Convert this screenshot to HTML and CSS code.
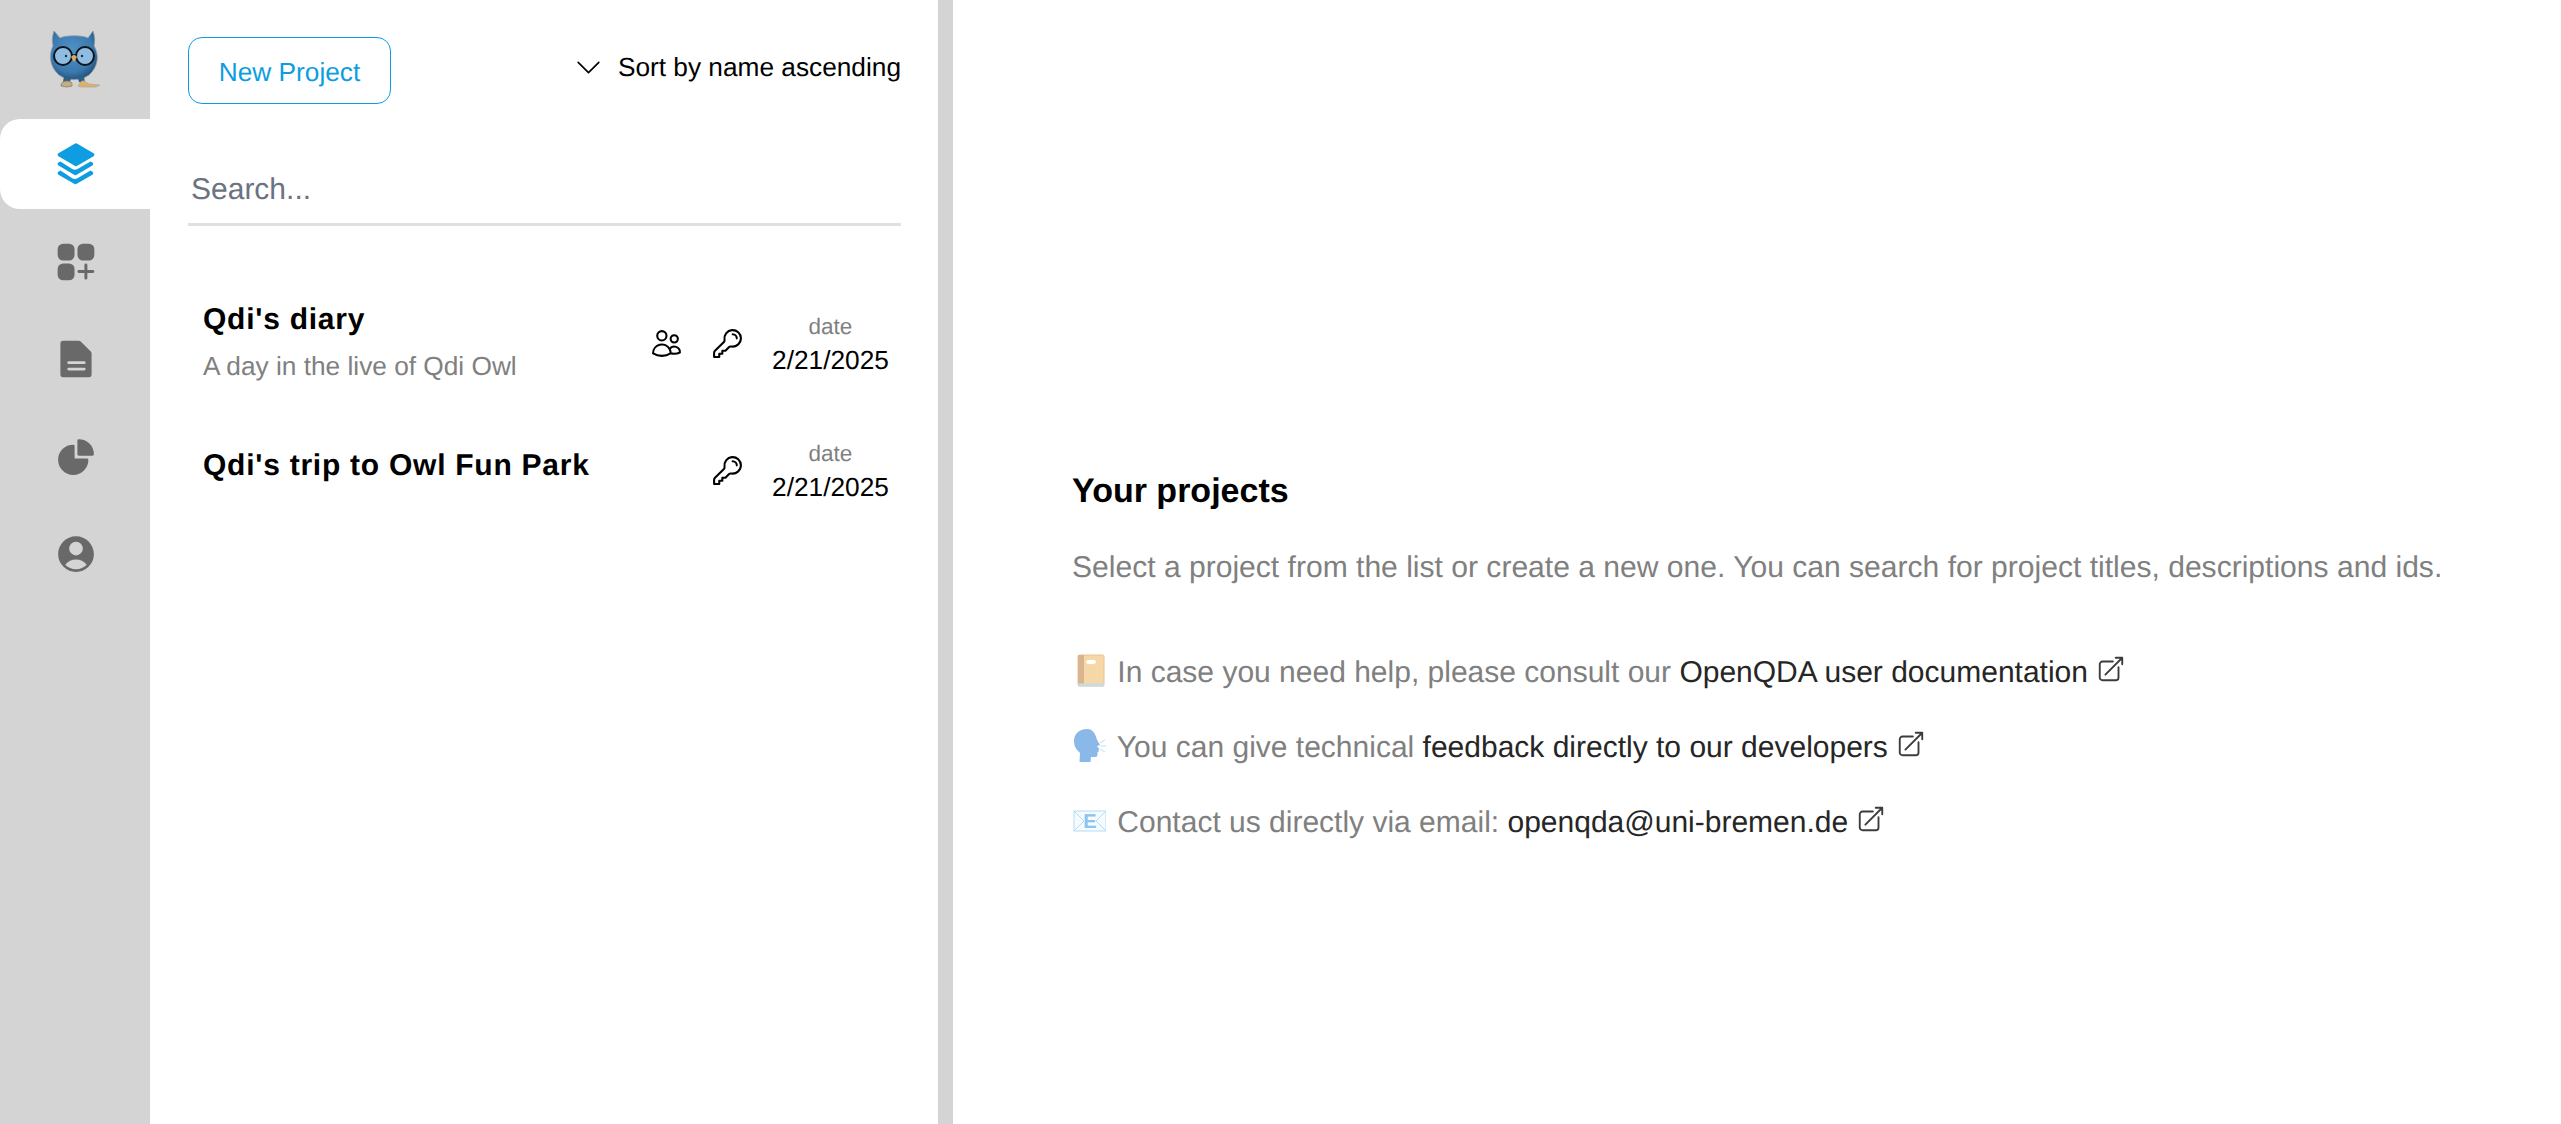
FILE: index.html
```html
<!DOCTYPE html>
<html lang="en">
<head>
<meta charset="utf-8">
<title>OpenQDA Projects</title>
<link rel="stylesheet" href="styles.css">
</head>
<body>
<div class="app">
  <nav class="rail">
    <div class="logo">
      <svg class="owl" viewBox="0 0 52 58">
        <defs>
          <radialGradient id="owlBody" cx="45%" cy="40%" r="65%"><stop offset="0" stop-color="#4f93c9"/><stop offset=".7" stop-color="#3a78ad"/><stop offset="1" stop-color="#1f4c74"/></radialGradient>
          <filter id="soft"><feGaussianBlur stdDeviation=".35"/></filter>
        </defs>
        <g filter="url(#soft)">
          <path d="M5 1 L11 8 C17 5 33 5 39 8 L44 1 C46 7 46 12 45 16 C50 24 50 36 40 45 C31 51 19 51 10 45 C0 36 0 24 4 16 C3 11 3 7 5 1Z" fill="url(#owlBody)" stroke="#8d9aa5" stroke-width=".8"/>
          <path d="M15 46 L14 52 L21 52 L22 48Z M29 48 L30 52 L36 53 L35 46Z" fill="#2d6187"/>
          <circle cx="14" cy="26" r="9" fill="#8fbde2" stroke="#101418" stroke-width="2"/>
          <circle cx="36" cy="26" r="9" fill="#8fbde2" stroke="#101418" stroke-width="2"/>
          <path d="M23 25h4" stroke="#101418" stroke-width="1.500"/>
          <circle cx="17" cy="26" r="1.200" fill="#1d2b36"/><circle cx="33" cy="26" r="1.200" fill="#1d2b36"/>
          <path d="M22 27 Q25 23 28 27 L25 32Z" fill="#e3a45b"/>
          <path d="M12 56 Q12 51 18 51 Q24 51 23 56 L18 57Z" fill="#c7ae82" stroke="#7f7460" stroke-width=".7"/>
          <path d="M29 56 Q32 50 35 51 L40 54 L51 55 L47 57 L31 57Z" fill="#e0b06b" stroke="#a8a39a" stroke-width=".6"/>
        </g>
      </svg>
    </div>
    <a class="rail-item active">
      <svg class="rail-icon layers" viewBox="0 0 20 20" fill="currentColor"><path d="M3.196 12.870l-.825.483a.75.75 0 000 1.294l7.004 4.086a.75.75 0 00.75 0l7.004-4.086a.75.75 0 000-1.294l-.825-.484-5.666 3.305a2.250 2.250 0 01-2.268 0L3.196 12.870z"/><path d="M3.196 8.870l-.825.483a.75.75 0 000 1.294l7.004 4.086a.75.75 0 00.75 0l7.004-4.086a.75.75 0 000-1.294l-.825-.484-5.666 3.305a2.250 2.250 0 01-2.268 0L3.196 8.870z"/><path d="M10.380 1.103a.75.75 0 00-.76 0l-7.250 4.250a.75.75 0 000 1.294l7.250 4.250a.75.75 0 00.76 0l7.250-4.250a.75.75 0 000-1.294l-7.250-4.250z"/></svg>
    </a>
    <a class="rail-item">
      <svg class="rail-icon" viewBox="0 0 24 24" fill="currentColor"><rect x="2" y="2" width="9.200" height="9.200" rx="3"/><rect x="12.800" y="2" width="9.200" height="9.200" rx="3"/><rect x="2" y="12.800" width="9.200" height="9.200" rx="3"/><path d="M17.400 12.800a.8.8 0 01.8.8v2.800H21.200a.8.8 0 010 1.600h-3v2.800a.8.8 0 01-1.600 0V18h-3a.8.8 0 010-1.600h3v-2.800a.8.8 0 01.8-.8z"/></svg>
    </a>
    <a class="rail-item">
      <svg class="rail-icon" viewBox="0 0 24 24" fill="currentColor"><path fill-rule="evenodd" d="M3.500 3.500A1.500 1.500 0 015 2h8.500a1.500 1.500 0 011.060.44l5.500 5.500a1.500 1.500 0 01.44 1.060V20.500a1.500 1.500 0 01-1.500 1.500H5a1.500 1.500 0 01-1.500-1.500V3.500zM8 13.250a.75.75 0 000 1.500h8.500a.75.75 0 000-1.500H8zm0 3.500a.75.75 0 000 1.500h8.500a.75.75 0 000-1.500H8z"/></svg>
    </a>
    <a class="rail-item">
      <svg class="rail-icon" viewBox="0 0 24 24" fill="currentColor"><path d="M2.250 13.500a8.250 8.250 0 018.250-8.250.75.75 0 01.75.75v6.750H18a.75.75 0 01.75.75 8.250 8.250 0 01-16.500 0z"/><path d="M12.750 3a.75.75 0 01.75-.75 8.250 8.250 0 018.250 8.250.75.75 0 01-.75.75h-7.500a.75.75 0 01-.75-.75V3z"/></svg>
    </a>
    <a class="rail-item">
      <svg class="rail-icon" viewBox="0 0 24 24" fill="currentColor"><path fill-rule="evenodd" d="M18.685 19.097A9.723 9.723 0 0021.750 12c0-5.385-4.365-9.750-9.750-9.750S2.250 6.615 2.250 12a9.723 9.723 0 003.065 7.097A9.716 9.716 0 0012 21.750a9.716 9.716 0 006.685-2.653zm-12.540-1.285A7.486 7.486 0 0112 15a7.486 7.486 0 015.855 2.812A8.224 8.224 0 0112 20.250a8.224 8.224 0 01-5.855-2.438zM15.750 9a3.750 3.750 0 11-7.500 0 3.750 3.750 0 017.500 0z"/></svg>
    </a>
  </nav>

  <section class="list-panel">
    <div class="toolbar">
      <button class="new-btn">New Project</button>
      <div class="sort">
        <svg class="chevron" viewBox="0 0 24 24" fill="none" stroke="currentColor" stroke-width="1.200" stroke-linecap="round" stroke-linejoin="round"><path d="M19.500 8.250l-7.500 7.500-7.500-7.500"/></svg>
        <span>Sort by name ascending</span>
      </div>
    </div>
    <input class="search" type="text" placeholder="Search...">
    <ul class="projects">
      <li class="project">
        <div class="project-text">
          <div class="project-title">Qdi's diary</div>
          <div class="project-desc">A day in the live of Qdi Owl</div>
        </div>
        <svg class="meta-icon" viewBox="0 0 24 24" fill="none" stroke="currentColor" stroke-width="1.500" stroke-linecap="round" stroke-linejoin="round"><path d="M15 19.128a9.380 9.380 0 002.625.372 9.337 9.337 0 004.121-.952 4.125 4.125 0 00-7.533-2.493M15 19.128v-.003c0-1.113-.285-2.160-.786-3.070M15 19.128v.106A12.318 12.318 0 018.624 21c-2.331 0-4.512-.645-6.374-1.766l-.001-.109a6.375 6.375 0 0111.964-3.070M12 6.375a3.375 3.375 0 11-6.750 0 3.375 3.375 0 016.750 0zm8.250 2.250a2.625 2.625 0 11-5.250 0 2.625 2.625 0 015.250 0z"/></svg>
        <svg class="meta-icon" viewBox="0 0 24 24" fill="none" stroke="currentColor" stroke-width="1.500" stroke-linecap="round" stroke-linejoin="round"><path d="M15.750 5.250a3 3 0 013 3m3 0a6 6 0 01-7.029 5.912c-.563-.097-1.159.026-1.563.43L10.500 17.250H8.250v2.250H6v2.250H2.250v-2.818c0-.597.237-1.170.659-1.591l6.499-6.499c.404-.404.527-1 .43-1.563A6 6 0 1121.750 8.250z"/></svg>
        <div class="date"><div class="date-label">date</div><div class="date-value">2/21/2025</div></div>
      </li>
      <li class="project">
        <div class="project-text">
          <div class="project-title">Qdi's trip to Owl Fun Park</div>
        </div>
        <svg class="meta-icon" viewBox="0 0 24 24" fill="none" stroke="currentColor" stroke-width="1.500" stroke-linecap="round" stroke-linejoin="round"><path d="M15.750 5.250a3 3 0 013 3m3 0a6 6 0 01-7.029 5.912c-.563-.097-1.159.026-1.563.43L10.500 17.250H8.250v2.250H6v2.250H2.250v-2.818c0-.597.237-1.170.659-1.591l6.499-6.499c.404-.404.527-1 .43-1.563A6 6 0 1121.750 8.250z"/></svg>
        <div class="date"><div class="date-label">date</div><div class="date-value">2/21/2025</div></div>
      </li>
    </ul>
  </section>

  <div class="divider"></div>

  <main class="intro">
    <h1 class="intro-title">Your projects</h1>
    <p class="intro-lead">Select a project from the list or create a new one. You can search for project titles, descriptions and ids.</p>
    <p class="intro-line">
      <svg class="emoji" viewBox="0 0 34 34"><rect x="6" y="1" width="26" height="31" rx="1.500" fill="#f6d7a7" stroke="#f2bd94"/><rect x="6" y="1" width="6" height="29" fill="#d9b48f"/><rect x="6" y="29.500" width="26" height="3" fill="#c7dbe0"/><ellipse cx="19" cy="8" rx="5" ry="2.200" fill="#fff"/></svg>
      In case you need help, please consult our <a class="link">OpenQDA user documentation<svg class="ext" viewBox="0 0 24 24" fill="none" stroke="currentColor" stroke-width="1.500" stroke-linecap="round" stroke-linejoin="round"><path d="M13.500 6H5.250A2.250 2.250 0 003 8.250v10.500A2.250 2.250 0 005.250 21h10.500A2.250 2.250 0 0018 18.750V10.500m-10.500 6L21 3m0 0h-5.250M21 3v5.250"/></svg></a>
    </p>
    <p class="intro-line">
      <svg class="emoji" viewBox="0 0 34 34"><path d="M15 0C7 0 2 5 2 12c0 6 3 9 6 12l-.5 9h11l.5-5h4c2 0 2.500-1 2.500-3v-2l1.500-.8-.6-1.200 1-1.500-1.700-1.200-.5-1 2.800-1.500-3-5C23.500 5 21 0 15 0z" fill="#8ab8e8"/><path d="M28 14l5-3M28 17h6M28 20l5 3" stroke="#c6dceb" stroke-width="1" fill="none"/></svg>
      You can give technical <a class="link">feedback directly to our developers<svg class="ext" viewBox="0 0 24 24" fill="none" stroke="currentColor" stroke-width="1.500" stroke-linecap="round" stroke-linejoin="round"><path d="M13.500 6H5.250A2.250 2.250 0 003 8.250v10.500A2.250 2.250 0 005.250 21h10.500A2.250 2.250 0 0018 18.750V10.500m-10.500 6L21 3m0 0h-5.250M21 3v5.250"/></svg></a>
    </p>
    <p class="intro-line">
      <svg class="emoji" viewBox="0 0 34 34"><rect x="2" y="7" width="32" height="20" fill="#f6fbff" stroke="#b5dcf5"/><path d="M2 7l10 10L2 27M34 7L24 17l10 10" fill="none" stroke="#b5dcf5"/><text class="emoji-e" x="18" y="24" text-anchor="middle">E</text></svg>
      Contact us directly via email: <a class="link">openqda@uni-bremen.de<svg class="ext" viewBox="0 0 24 24" fill="none" stroke="currentColor" stroke-width="1.500" stroke-linecap="round" stroke-linejoin="round"><path d="M13.500 6H5.250A2.250 2.250 0 003 8.250v10.500A2.250 2.250 0 005.250 21h10.500A2.250 2.250 0 0018 18.750V10.500m-10.500 6L21 3m0 0h-5.250M21 3v5.250"/></svg></a>
    </p>
  </main>
</div>
</body>
</html>
```
FILE: styles.css
```css
* { box-sizing: border-box; }
html, body { margin: 0; height: 100%; }
body { font-family: "Liberation Sans", Arial, sans-serif; font-size: 26.25px; color: #000; background: #fff; overflow: hidden; text-rendering: geometricPrecision; }
.app { display: flex; height: 1124px; }

.rail { width: 150px; flex: none; background: #d4d4d4; display: flex; flex-direction: column; gap: 7.500px; }
.logo { height: 111.500px; display: flex; align-items: flex-start; justify-content: center; padding-top: 30px; }
.owl { width: 52px; height: 58px; display: block; }
.rail-item { height: 90px; display: flex; align-items: center; justify-content: center; padding-left: 1px; color: #696969; }
.rail-item.active { background: #fff; color: #0d9de0; border-radius: 20px 0 0 20px; }
.rail-icon { width: 44px; height: 44px; display: block; }
.rail-icon.layers { width: 46px; height: 46px; }

.list-panel { width: 788px; flex: none; padding: 37px 37px 0 38px; }
.toolbar { display: flex; justify-content: space-between; align-items: flex-start; }
.new-btn { width: 203px; height: 67px; border: 1.500px solid #0d9de0; border-radius: 14px; background: #fff; color: #0d9de0; font: inherit; padding: 4px 0 0; text-rendering: geometricPrecision; }
.sort { display: flex; align-items: center; gap: 13px; height: 40px; margin-top: 10px; line-height: 1; }
.chevron { width: 33px; height: 33px; display: block; }
.search { display: block; width: 100%; height: 76px; margin-top: 46px; border: 0; border-bottom: 3px solid #e0e0e0; padding: 6px 3px 0; font: inherit; font-size: 30px; outline: none; background: transparent; text-rendering: geometricPrecision; }
.search::placeholder { color: #6b7280; opacity: 1; }

.projects { list-style: none; margin: 54px 0 0; padding: 0; }
.project { display: flex; align-items: center; height: 127px; padding: 0 12px 0 15px; }
.project-text { flex: 1; min-width: 0; }
.project-title { font-size: 30px; font-weight: 700; letter-spacing: .75px; line-height: 40px; }
.project-title:only-child { margin-bottom: 10px; }
.project-desc { font-size: 26.25px; color: #808080; line-height: 33px; margin: 10px 0 4px; }
.meta-icon { width: 33px; height: 33px; flex: none; margin-left: 28px; }
.date { width: 117px; margin-left: 28px; flex: none; text-align: center; }
.date-label { font-size: 22.500px; color: #808080; line-height: 33px; }
.date-value { font-size: 26.25px; line-height: 34px; }

.divider { width: 15px; flex: none; background: #d4d4d4; }

.intro { flex: 1; min-width: 0; padding: 190px 0 0 119px; display: flex; flex-direction: column; justify-content: center; font-size: 30px; color: #808080; }
.intro-title { margin: 0; font-size: 34px; line-height: 44px; font-weight: 700; color: #000; }
.intro-lead { margin: 32px 0 0; line-height: 45px; font-size: 30.07px; }
.intro-line { margin: 0; margin-top: 30px; line-height: 45px; }
.intro-lead + .intro-line { margin-top: 60px; }
.emoji { width: 34px; height: 34px; vertical-align: -6px; margin-right: 3px; }
.emoji-e { font-size: 20px; font-weight: 700; fill: #8cc4f0; }
.link { color: #262626; }
.ext { width: 30px; height: 30px; vertical-align: -2px; margin-left: 8px; color: #3c3c3c; }
```
